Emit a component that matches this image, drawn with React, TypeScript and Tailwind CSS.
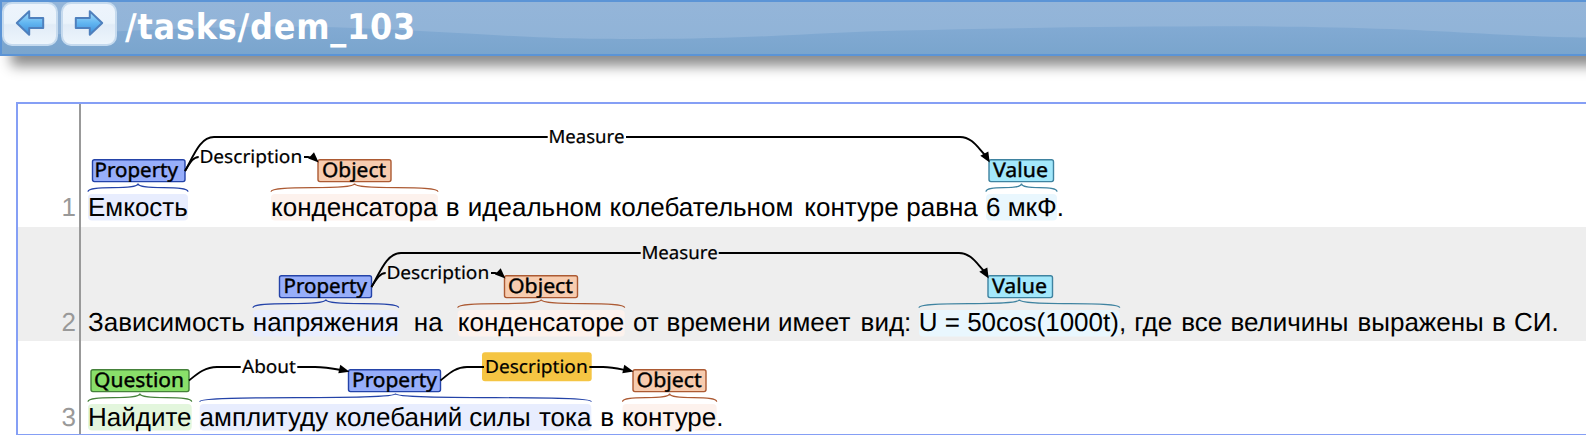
import React from "react";

type Token = { x: number; text: string };
type Kind = "property" | "object" | "value" | "question";
type Entity = {
  kind: Kind;
  label: string;
  box: [number, number];
  text: [number, number];
  span: [number, number];
};
type Arc = {
  d: string;
  head: string;
  label: string;
  text: [number, number];
  baseline: number;
  selected?: [number, number, number, number];
};
type Sentence = {
  num: number;
  top: number;
  height: number;
  boxTop: number;
  baseline: number;
  rowClass: string;
  tokens: Token[];
  entities: Entity[];
  arcs: Arc[];
};

const LEFT = 18;
const WIDTH = 1568;

const colors: Record<Kind, { fill: string; stroke: string; tint: string }> = {
  property: { fill: "#97aefa", stroke: "#2443a8", tint: "#e8edfe" },
  object: { fill: "#f7ccaf", stroke: "#ac5a33", tint: "#fdf2ed" },
  value: { fill: "#a3e8fb", stroke: "#3f83a0", tint: "#e9f7fe" },
  question: { fill: "#89df6a", stroke: "#45813a", tint: "#e3f6dd" },
};

const sentences: Sentence[] = [
  {
    num: 1,
    top: 104,
    height: 123,
    boxTop: 159.5,
    baseline: 216,
    rowClass: "h-[123px] bg-white",
    tokens: [
      { x: 88, text: "Емкость" },
      { x: 271, text: "конденсатора" },
      { x: 445.8, text: "в" },
      { x: 467.8, text: "идеальном" },
      { x: 609.6, text: "колебательном" },
      { x: 804.3, text: "контуре" },
      { x: 906.3, text: "равна" },
      { x: 986, text: "6 мкФ." },
    ],
    entities: [
      { kind: "property", label: "Property", box: [92.5, 185], text: [94.5, 178], span: [88, 188] },
      { kind: "object", label: "Object", box: [318, 391], text: [322, 386], span: [271, 438] },
      { kind: "value", label: "Value", box: [989, 1053.5], text: [993, 1048], span: [986, 1057] },
    ],
    arcs: [
      {
        d: "M185 171 C194 155 200 137 214 137 H547.7 M626 137 H960 C972 137 978 148 985 155",
        head: "M980.3 155.7 L988.3 151.5 L989.7 162.5 Z",
        label: "Measure",
        text: [548.4, 624.4],
        baseline: 143,
      },
      {
        d: "M185 171 C190 163 193 157 198.7 157 M304 157 H308 L312 158",
        head: "M308.3 158.5 L314 152.3 L318.7 162.4 Z",
        label: "Description",
        text: [199.4, 302.2],
        baseline: 163,
      },
    ],
  },
  {
    num: 2,
    top: 227,
    height: 114,
    boxTop: 275.5,
    baseline: 331,
    rowClass: "h-[114px] bg-[#eeeeee]",
    tokens: [
      { x: 88, text: "Зависимость" },
      { x: 252.8, text: "напряжения" },
      { x: 413.8, text: "на" },
      { x: 457.8, text: "конденсаторе" },
      { x: 633, text: "от" },
      { x: 666.6, text: "времени" },
      { x: 778, text: "имеет" },
      { x: 860.6, text: "вид:" },
      { x: 918.8, text: "U = 50cos(1000t)," },
      { x: 1134.3, text: "где" },
      { x: 1181.4, text: "все" },
      { x: 1230.5, text: "величины" },
      { x: 1357.5, text: "выражены" },
      { x: 1492, text: "в" },
      { x: 1514, text: "СИ." },
    ],
    entities: [
      { kind: "property", label: "Property", box: [279.5, 371.5], text: [283.5, 367], span: [253, 398.7] },
      { kind: "object", label: "Object", box: [504.5, 577.5], text: [508, 573], span: [457.7, 624.7] },
      { kind: "value", label: "Value", box: [988, 1052.5], text: [992, 1047], span: [919, 1119.7] },
    ],
    arcs: [
      {
        d: "M371.5 287 C380.5 271 387 253 401 253 H640.7 M718.7 253 H959 C971 253 977 264 984 271",
        head: "M979.3 271.7 L987.3 267.5 L988.7 278.5 Z",
        label: "Measure",
        text: [641.4, 717.7],
        baseline: 259,
      },
      {
        d: "M371.5 287 C376.5 279 380 273 385.7 273 M491 273 H495 L499 274",
        head: "M495 274.5 L500.7 268.3 L505.4 278.4 Z",
        label: "Description",
        text: [386.4, 489.2],
        baseline: 279,
      },
    ],
  },
  {
    num: 3,
    top: 341,
    height: 93,
    boxTop: 369.5,
    baseline: 426,
    rowClass: "h-[93px] bg-white",
    tokens: [
      { x: 88, text: "Найдите" },
      { x: 199.6, text: "амплитуду" },
      { x: 335.3, text: "колебаний" },
      { x: 469.3, text: "силы" },
      { x: 539, text: "тока" },
      { x: 600.3, text: "в" },
      { x: 622, text: "контуре." },
    ],
    entities: [
      { kind: "question", label: "Question", box: [91, 189], text: [94, 184], span: [88, 191.7] },
      { kind: "property", label: "Property", box: [348.5, 440.5], text: [352, 437], span: [199.7, 591.3] },
      { kind: "object", label: "Object", box: [633, 706], text: [636.5, 701.7], span: [622.5, 716.7] },
    ],
    arcs: [
      {
        d: "M189 380.5 C196 375 204 367 217 367 H240.7 M297.3 367 H315 C325 367 333 368.5 341 370",
        head: "M340.3 364.7 L349.5 371.7 L338.3 373.2 Z",
        label: "About",
        text: [242, 296],
        baseline: 373,
      },
      {
        d: "M440.5 380.5 C447.5 375 455 367 467 367 H484 M589.3 367 H603 C612 367 618 368.5 625 370",
        head: "M624.3 364.7 L633.5 371.5 L622.3 373.2 Z",
        label: "Description",
        text: [485, 587.7],
        baseline: 373,
        selected: [482, 352.3, 109.7, 29],
      },
    ],
  },
];

function brace([x0, x1]: [number, number], boxTop: number) {
  const foot = boxTop + 32.2;
  const tip = boxTop + 24;
  const mid = (x0 + x1) / 2;
  return `M${x0} ${foot} C${x0} ${tip + 0.6} ${mid} ${foot - 0.4} ${mid} ${tip} C${mid} ${foot - 0.4} ${x1} ${tip + 0.6} ${x1} ${foot}`;
}

function Highlights({ s }: { s: Sentence }) {
  return (
    <svg
      className="absolute top-0 left-0 h-full w-full"
      viewBox={`${LEFT} ${s.top} ${WIDTH} ${s.height}`}
      preserveAspectRatio="xMinYMin meet"
    >
      {s.entities.map((e) => (
        <rect
          key={e.label}
          x={e.span[0]}
          y={s.boxTop + 34.5}
          width={e.span[1] - e.span[0]}
          height={26.5}
          rx={4}
          fill={colors[e.kind].tint}
        />
      ))}
    </svg>
  );
}

function Annotations({ s }: { s: Sentence }) {
  return (
    <svg
      className="absolute top-0 left-0 h-full w-full font-['Noto_Sans',sans-serif]"
      viewBox={`${LEFT} ${s.top} ${WIDTH} ${s.height}`}
      preserveAspectRatio="xMinYMin meet"
    >
      {s.entities.map((e) => {
        const c = colors[e.kind];
        return (
          <g key={e.label}>
            <path d={brace(e.span, s.boxTop)} fill="none" stroke={c.stroke} strokeWidth={1.2} />
            <rect
              x={e.box[0]}
              y={s.boxTop + 0.3}
              width={e.box[1] - e.box[0]}
              height={21.8}
              rx={2}
              fill={c.fill}
              stroke={c.stroke}
              strokeWidth={1.4}
            />
            <text
              x={e.text[0]}
              y={s.boxTop + 17.5}
              textLength={e.text[1] - e.text[0]}
              lengthAdjust="spacingAndGlyphs"
              fontSize={20}
              stroke="#000"
              strokeWidth={0.4}
            >
              {e.label}
            </text>
          </g>
        );
      })}
      {s.arcs.map((a) => (
        <g key={a.label}>
          {a.selected && (
            <rect
              x={a.selected[0]}
              y={a.selected[1]}
              width={a.selected[2]}
              height={a.selected[3]}
              rx={3}
              fill="#f5c543"
            />
          )}
          <path d={a.d} fill="none" stroke="#000" strokeWidth={1.9} />
          <path d={a.head} fill="#000" />
          <text
            x={a.text[0]}
            y={a.baseline}
            textLength={a.text[1] - a.text[0]}
            lengthAdjust="spacingAndGlyphs"
            fontSize={18.2}
            stroke="#000"
            strokeWidth={0.2}
          >
            {a.label}
          </text>
        </g>
      ))}
    </svg>
  );
}

function SentenceRow({ s }: { s: Sentence }) {
  const lift = s.top + s.height - s.baseline - 5.5;
  return (
    <div className={`relative flex items-end ${s.rowClass}`}>
      <Highlights s={s} />
      <div className="relative flex h-full w-[63px] shrink-0 items-end justify-end border-r-2 border-[#999999] pr-[3px]">
        <span className="block text-[26px] leading-[30px] text-[#999999]" style={{ marginBottom: lift }}>
          {s.num}
        </span>
      </div>
      <div
        className="relative flex whitespace-pre text-[26px] leading-[30px] text-black"
        style={{ marginLeft: s.tokens[0].x - 81, marginBottom: lift }}
      >
        {s.tokens.map((t, i) => {
          const next = s.tokens[i + 1];
          return (
            <span key={t.x} className="block shrink-0" style={next ? { width: next.x - t.x } : undefined}>
              {t.text}
            </span>
          );
        })}
      </div>
      <Annotations s={s} />
    </div>
  );
}

function ArrowIcon({ className, id }: { className?: string; id: string }) {
  return (
    <svg viewBox="0 0 30 28" className={className}>
      <defs>
        <linearGradient id={id} x1="0" y1="0" x2="0" y2="1">
          <stop offset="0" stopColor="#a5dcfa" />
          <stop offset="0.5" stopColor="#62b6f1" />
          <stop offset="1" stopColor="#3a8ad8" />
        </linearGradient>
      </defs>
      <path
        d="M1.8 14 L14.2 2.2 V8.9 H28.2 V19.1 H14.2 V25.8 Z"
        fill={`url(#${id})`}
        stroke="#4f80bd"
        strokeWidth="2"
        strokeLinejoin="round"
      />
    </svg>
  );
}

function NavButton({ forward }: { forward?: boolean }) {
  return (
    <button
      type="button"
      aria-label={forward ? "Next" : "Previous"}
      className="flex h-[44px] w-[56px] items-start justify-center rounded-[10px] border-2 border-[#c5daee] bg-[linear-gradient(#edf4fc_0%,#eaf3fb_48%,#e1ecf7_52%,#edf5fc_100%)] pt-[5px]"
    >
      <ArrowIcon
        id={forward ? "arrow-next" : "arrow-prev"}
        className={forward ? "h-[28px] w-[30px] -scale-x-100" : "h-[28px] w-[30px]"}
      />
    </button>
  );
}

function Header() {
  return (
    <header className="relative flex h-[56px] w-[1610px] shrink-0 items-start border-2 border-[#5b94d6] bg-[linear-gradient(#94b5d9,#8fb3d7)] shadow-[11px_10px_12px_#8c8c8c]">
      <svg viewBox="0 0 1584 52" className="absolute top-0 left-0 h-[52px] w-[1584px]">
        <defs>
          <linearGradient id="wave" x1="0" y1="0" x2="0" y2="1">
            <stop offset="0" stopColor="#82aad3" />
            <stop offset="1" stopColor="#7aa5cd" />
          </linearGradient>
        </defs>
        <path
          d="M0 35 C90 31 170 25 280 24.5 C350 24.5 420 29 500 33.5 C560 37 600 37 640 37 C760 37 820 30 900 28.5 C1000 26 1120 24.3 1240 24.3 C1350 24.5 1420 28 1480 31.5 C1520 34 1560 35 1584 35.5 V52 H0 Z"
          fill="url(#wave)"
        />
      </svg>
      <div className="relative flex gap-[3px]">
        <NavButton />
        <NavButton forward />
      </div>
      <h1 className="relative ml-[8px] text-[35.5px] leading-[52px] font-bold tracking-[0.8px] whitespace-nowrap text-white font-['DejaVu_Sans_Condensed','DejaVu_Sans',sans-serif] [font-stretch:condensed]">
        /tasks/dem_103
      </h1>
    </header>
  );
}

export default function App() {
  return (
    <div className="flex h-[448px] w-full flex-col overflow-hidden bg-white font-['Liberation_Sans',Arial,sans-serif] [text-rendering:geometricPrecision]">
      <Header />
      <main className="mt-[46px] ml-[16px] w-[1570px] shrink-0 border-t-2 border-b border-l-2 border-[#859ff5]">
        {sentences.map((s) => (
          <SentenceRow key={s.num} s={s} />
        ))}
      </main>
    </div>
  );
}
